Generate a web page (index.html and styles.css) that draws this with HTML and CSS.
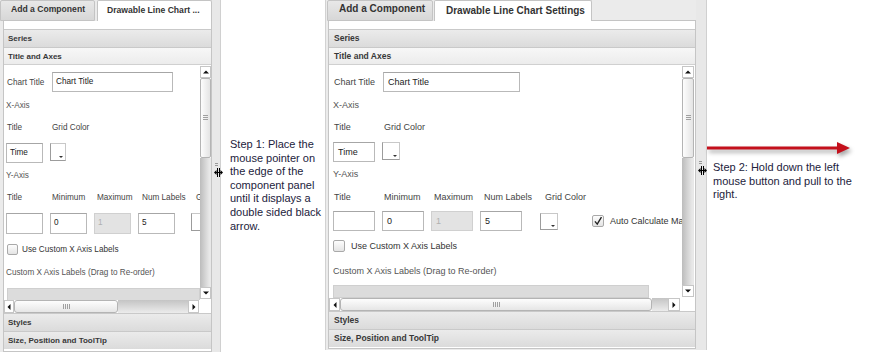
FILE: index.html
```html
<!doctype html>
<html lang="en">
  <head>
    <meta charset="UTF-8" />
    <title>Resize the component panel</title>
    <link rel="stylesheet" href="styles.css">
  </head>
  <body>
    <div class="page">

      <!-- before: narrow panel -->
      <div class="panel panel-narrow">
        <div class="pane">
          <div class="tabs">
            <div class="tab">Add a Component</div>
            <div class="tab tab-active">Drawable Line Chart ...</div>
          </div>
          <div class="box">
            <div class="acc-head">Series</div>
            <div class="acc-head acc-open">Title and Axes</div>
            <div class="acc-body">
              <div class="view">
                <div class="form">
                  <div class="row-chart">
                    <span class="lbl">Chart Title</span>
                    <div class="input input-wide">Chart Title</div>
                  </div>
                  <div class="sec sec-x">X-Axis</div>
                  <div class="labels labels-x">
                    <span>Title</span><span>Grid Color</span>
                  </div>
                  <div class="fields fields-x">
                    <div class="cell"><div class="input">Time</div></div>
                    <div class="cell"><div class="color"></div></div>
                  </div>
                  <div class="sec sec-y">Y-Axis</div>
                  <div class="labels labels-y">
                    <span>Title</span><span>Minimum</span><span>Maximum</span><span>Num Labels</span><span>Grid Color</span>
                  </div>
                  <div class="fields fields-y">
                    <div class="cell"><div class="input"></div></div>
                    <div class="cell"><div class="input">0</div></div>
                    <div class="cell"><div class="input input-off">1</div></div>
                    <div class="cell"><div class="input">5</div></div>
                    <div class="cell"><div class="color"></div></div>
                  </div>
                  <div class="check-row">
                    <span class="check"></span>
                    <span>Use Custom X Axis Labels</span>
                  </div>
                  <div class="sec sec-custom">Custom X Axis Labels (Drag to Re-order)</div>
                  <div class="list"></div>
                </div>
                <div class="vscroll">
                  <div class="sbtn sbtn-up"></div>
                  <div class="thumb"><span class="grip"></span></div>
                  <div class="track"></div>
                  <div class="sbtn sbtn-down"></div>
                </div>
              </div>
              <div class="hscroll">
                <div class="sbtn sbtn-left"></div>
                <div class="hthumb"><span class="hgrip"></span></div>
                <div class="htrack"></div>
                <div class="sbtn sbtn-right"></div>
                <div class="corner"></div>
              </div>
            </div>
            <div class="acc-head">Styles</div>
            <div class="acc-head">Size, Position and ToolTip</div>
          </div>
        </div>
        <div class="splitter">
          <span class="dots"></span>
          <svg class="cursor" width="9" height="9" viewBox="0 0 9 9">
            <path d="M3.5 0v9M5.5 0v9M1 4.5h7" stroke="#000" stroke-width="1" fill="none"/>
            <polygon points="0,4.5 2.5,2 2.5,7" fill="#000"/>
            <polygon points="9,4.5 6.5,2 6.5,7" fill="#000"/>
          </svg>
        </div>
      </div>

      <div class="step step-one">
        Step 1: Place the<br>mouse pointer on<br>the edge of the<br>component panel<br>until it displays a<br>double sided black<br>arrow.
      </div>

      <!-- after: wide panel -->
      <div class="panel panel-wide">
        <div class="pane">
          <div class="tabs">
            <div class="tab">Add a Component</div>
            <div class="tab tab-active">Drawable Line Chart Settings</div>
            <div class="tab-fill"></div>
          </div>
          <div class="box">
            <div class="acc-head">Series</div>
            <div class="acc-head acc-open">Title and Axes</div>
            <div class="acc-body">
              <div class="view">
                <div class="form">
                  <div class="row-chart">
                    <span class="lbl">Chart Title</span>
                    <div class="input input-wide">Chart Title</div>
                  </div>
                  <div class="sec sec-x">X-Axis</div>
                  <div class="labels labels-x">
                    <span>Title</span><span>Grid Color</span>
                  </div>
                  <div class="fields fields-x">
                    <div class="cell"><div class="input">Time</div></div>
                    <div class="cell"><div class="color"></div></div>
                  </div>
                  <div class="sec sec-y">Y-Axis</div>
                  <div class="labels labels-y">
                    <span>Title</span><span>Minimum</span><span>Maximum</span><span>Num Labels</span><span>Grid Color</span>
                  </div>
                  <div class="fields fields-y">
                    <div class="cell"><div class="input"></div></div>
                    <div class="cell"><div class="input">0</div></div>
                    <div class="cell"><div class="input input-off">1</div></div>
                    <div class="cell"><div class="input">5</div></div>
                    <div class="cell"><div class="color"></div></div>
                    <div class="cell cell-auto">
                      <span class="check check-on">
                        <svg width="13" height="12" viewBox="0 0 13 12"><path d="M2.5 6.5l3 3.5 5.5-9" stroke="#222" stroke-width="1.8" fill="none"/></svg>
                      </span>
                      <span class="auto-text">Auto Calculate Max/Min</span>
                    </div>
                  </div>
                  <div class="check-row">
                    <span class="check"></span>
                    <span>Use Custom X Axis Labels</span>
                  </div>
                  <div class="sec sec-custom">Custom X Axis Labels (Drag to Re-order)</div>
                  <div class="list"></div>
                </div>
                <div class="vscroll">
                  <div class="sbtn sbtn-up"></div>
                  <div class="thumb"><span class="grip"></span></div>
                  <div class="track"></div>
                  <div class="sbtn sbtn-down"></div>
                </div>
              </div>
              <div class="hscroll">
                <div class="sbtn sbtn-left"></div>
                <div class="hthumb"><span class="hgrip"></span></div>
                <div class="htrack"></div>
                <div class="sbtn sbtn-right"></div>
                <div class="corner"></div>
              </div>
            </div>
            <div class="acc-head">Styles</div>
            <div class="acc-head">Size, Position and ToolTip</div>
          </div>
        </div>
        <div class="splitter">
          <span class="dots"></span>
          <svg class="cursor" width="9" height="9" viewBox="0 0 9 9">
            <path d="M3.5 0v9M5.5 0v9M1 4.5h7" stroke="#000" stroke-width="1" fill="none"/>
            <polygon points="0,4.5 2.5,2 2.5,7" fill="#000"/>
            <polygon points="9,4.5 6.5,2 6.5,7" fill="#000"/>
          </svg>
        </div>
      </div>

      <div class="step step-two">
        <svg class="arrow" width="146" height="16" viewBox="0 0 146 16">
          <rect x="0" y="5.5" width="132" height="3" fill="#c4101c"/>
          <polygon points="130,1 143,7 130,13" fill="#c4101c"/>
        </svg>
        <p>Step 2: Hold down the left<br>mouse button and pull to the<br>right.</p>
      </div>

    </div>
  </body>
</html>
```

FILE: styles.css
```css
body {
  margin: 0;
  font-family: "Liberation Sans", Arial, sans-serif;
  background-color: #fff;
}
.page {
  display: flex;
  width: 883px;
  height: 352px;
  overflow: hidden;
}

/* panel frame */
.panel {
  display: flex;
  flex: none;
  background-color: #ebebeb;
}
.panel-narrow {
  width: 221px;
  height: 352px;
}
.panel-wide {
  width: 382px;
  height: 350px;
}
.pane {
  display: flex;
  flex-direction: column;
  flex: none;
}
.panel-narrow .pane {
  width: 212px;
}
.panel-wide .pane {
  width: 369px;
  border-left: 1px solid #d2d2d2;
  padding-left: 1px;
}
.splitter {
  display: flex;
  flex-direction: column;
  box-sizing: border-box;
  border-right: 1px solid #d0d0d0;
  background-color: #e8e8e8;
}
.panel-narrow .splitter {
  width: 9px;
  padding: 163px 0 0 2px;
}
.panel-wide .splitter {
  width: 11px;
  padding: 161px 0 0 2px;
}
.dots {
  width: 3px;
  height: 4px;
  margin-left: 1px;
  background: repeating-linear-gradient(#9a9a9a 0 1px, transparent 1px 2px);
}
.cursor {
  display: block;
  margin-top: 1px;
}

/* tabs */
.tabs {
  display: flex;
  flex: none;
  height: 21px;
}
.tab {
  box-sizing: border-box;
  height: 21px;
  border: 1px solid #c4c4c4;
  border-radius: 2px 2px 0 0;
  background: linear-gradient(#e8e8e8, #d7d7d7);
  color: #333;
  font-weight: bold;
  line-height: 16px;
  white-space: nowrap;
}
.tab-active {
  border-bottom: none;
  background: #fff;
  line-height: 19px;
}
.tab-fill {
  flex: 1;
  border-bottom: 1px solid #c4c4c4;
}
.panel-narrow .tab {
  width: 95px;
  padding-left: 10px;
  font-size: 8.6px;
}
.panel-narrow .tab-active {
  flex: 1;
  margin-left: 2px;
  padding-left: 9px;
}
.panel-wide .tab {
  width: 106px;
  padding-left: 11px;
  font-size: 10px;
}
.panel-wide .tab-active {
  width: 158px;
  margin-left: 1px;
  padding-left: 11px;
}

/* accordion box */
.box {
  display: flex;
  flex-direction: column;
  flex: 1;
  min-height: 0;
  background-color: #fff;
  border: 1px solid #c5c5c5;
  border-top: none;
  padding-top: 8px;
}
.panel-narrow .box {
  margin-left: 3px;
  padding-bottom: 2px;
}
.panel-wide .box {
  margin: 0 0 1px 1px;
  padding-bottom: 1px;
}
.acc-head {
  flex: none;
  box-sizing: border-box;
  height: 18px;
  border-top: 1px solid #c9c9c9;
  background: linear-gradient(#ebebeb, #dbdbdb);
  color: #383838;
  font-weight: bold;
  line-height: 17px;
}
.acc-open {
  background: linear-gradient(#f7f7f7, #ececec);
  border-bottom: 1px solid #d0d0d0;
}
.panel-narrow .acc-head {
  padding-left: 4px;
  font-size: 8px;
}
.panel-wide .acc-head {
  padding-left: 5px;
  font-size: 8.5px;
}
.acc-body {
  display: flex;
  flex-direction: column;
  flex: 1;
  min-height: 0;
}
.view {
  display: flex;
  flex: 1;
  min-height: 0;
}

/* form */
.form {
  flex: 1;
  min-width: 0;
  overflow: hidden;
  color: #444;
  white-space: nowrap;
}
.panel-narrow .form {
  padding: 7px 0 0 2px;
  font-size: 8.2px;
}
.panel-wide .form {
  padding: 7px 0 0 4px;
  font-size: 9px;
}
.row-chart {
  display: flex;
  align-items: center;
  height: 20px;
}
.lbl {
  padding-left: 1px;
}
.panel-narrow .lbl {
  width: 45px;
}
.panel-wide .lbl {
  width: 49px;
}
.input {
  box-sizing: border-box;
  height: 20px;
  border: 1px solid #b9b9b9;
  border-top-color: #a6a6a6;
  background-color: #fff;
  color: #222;
  line-height: 18px;
}
.panel-narrow .input {
  width: 37px;
  padding-left: 3px;
}
.panel-wide .input {
  width: 42px;
  padding-left: 4px;
}
.panel-narrow .input-wide {
  width: 121px;
}
.panel-wide .input-wide {
  width: 137px;
}
.input-off {
  background-color: #e3e3e3;
  border-color: #d0d0d0;
  color: #b0b0b0;
}
.color {
  position: relative;
  box-sizing: border-box;
  border: 1px solid #9c9c9c;
  border-top-color: #c8c8c8;
  border-right-color: #c8c8c8;
  background-color: #fff;
}
.color::after {
  content: "";
  position: absolute;
  right: 2px;
  bottom: 2px;
  border-left: 2px solid transparent;
  border-right: 2px solid transparent;
  border-top: 2px solid #333;
}
.panel-narrow .color {
  width: 16px;
  height: 18px;
}
.panel-wide .color {
  width: 18px;
  height: 18px;
}
.sec {
  color: #555;
}
.labels,
.fields {
  display: flex;
}
.labels span,
.cell {
  flex: none;
}
.labels span {
  padding-left: 1px;
}
.panel-narrow .labels span,
.panel-narrow .cell {
  width: 44px;
}
.panel-narrow .labels span:nth-child(4),
.panel-narrow .cell:nth-child(4) {
  width: 53px;
}
.panel-wide .labels span,
.panel-wide .cell {
  width: 49px;
}
.panel-wide .labels span:nth-child(4),
.panel-wide .cell:nth-child(4) {
  width: 60px;
}
.panel-wide .cell:nth-child(5) {
  width: 52px;
}
.panel-wide .fields-y .color {
  height: 17px;
  margin-top: 2px;
}
.cell-auto {
  display: flex;
  align-items: center;
  color: #333;
}
.panel-wide .cell-auto {
  width: auto;
}
.panel-wide .check-on {
  margin-right: 6px;
}
.check {
  display: flex;
  align-items: center;
  justify-content: center;
  box-sizing: border-box;
  border: 1px solid #a9a9a9;
  border-radius: 2px;
  background: linear-gradient(#fdfdfd, #e4e4e4);
}
.panel-narrow .check {
  width: 11px;
  height: 11px;
  margin: 0 4px 0 1px;
}
.panel-wide .check {
  width: 12px;
  height: 12px;
  margin-right: 6px;
}
.check-row {
  display: flex;
  align-items: center;
  color: #333;
}
.list {
  box-sizing: border-box;
  border: 1px solid #cfcfcf;
  background-color: #dcdcdc;
}

/* vertical rhythm, narrow */
.panel-narrow .sec-x { height: 28px; line-height: 28px; }
.panel-narrow .labels-x { height: 16px; line-height: 16px; }
.panel-narrow .fields-x { margin-top: 7px; }
.panel-narrow .sec-y { height: 26px; line-height: 26px; }
.panel-narrow .labels-y { height: 18px; line-height: 18px; }
.panel-narrow .fields-y { margin-top: 6px; }
.panel-narrow .fields-y .input { height: 21px; }
.panel-narrow .check-row { height: 30px; }
.panel-narrow .sec-custom { height: 18px; line-height: 18px; }
.panel-narrow .list { height: 14px; margin: 6px 0 0 1px; }

/* vertical rhythm, wide */
.panel-wide .sec-x { height: 26px; line-height: 26px; }
.panel-wide .labels-x { height: 18px; line-height: 18px; }
.panel-wide .fields-x { margin-top: 6px; }
.panel-wide .sec-y { height: 24px; line-height: 24px; }
.panel-wide .labels-y { height: 22px; line-height: 22px; }
.panel-wide .fields-y { margin-top: 3px; height: 20px; }
.panel-wide .check-row { height: 30px; }
.panel-wide .sec-custom { height: 20px; line-height: 20px; }
.panel-wide .list { width: 316px; height: 13px; margin-top: 4px; }

/* scrollbars */
.vscroll {
  display: flex;
  flex-direction: column;
  flex: none;
  padding: 1px 0;
}
.panel-narrow .vscroll {
  width: 11px;
}
.panel-wide .vscroll {
  width: 12px;
  margin-right: 1px;
}
.sbtn {
  position: relative;
  flex: none;
  box-sizing: border-box;
  border: 1px solid #c6c6c6;
  background-color: #fff;
}
.sbtn::before {
  content: "";
  position: absolute;
  left: 50%;
  top: 50%;
  transform: translate(-50%, -50%);
}
.sbtn-up,
.sbtn-down {
  height: 12px;
}
.sbtn-up::before {
  border-left: 3px solid transparent;
  border-right: 3px solid transparent;
  border-bottom: 3px solid #111;
}
.sbtn-down::before {
  border-left: 3px solid transparent;
  border-right: 3px solid transparent;
  border-top: 3px solid #111;
}
.sbtn-left::before {
  border-top: 3px solid transparent;
  border-bottom: 3px solid transparent;
  border-right: 3px solid #111;
}
.sbtn-right::before {
  border-top: 3px solid transparent;
  border-bottom: 3px solid transparent;
  border-left: 3px solid #111;
}
.thumb {
  display: flex;
  align-items: center;
  justify-content: center;
  flex: none;
  box-sizing: border-box;
  height: 80px;
  border: 1px solid #b4b4b4;
  border-radius: 2px;
  background: linear-gradient(to right, #fdfdfd, #e4e4e4);
}
.grip {
  width: 5px;
  height: 6px;
  background: repeating-linear-gradient(#a0a0a0 0 1px, transparent 1px 2px);
}
.track {
  flex: 1;
  background: linear-gradient(to right, #bcbcbc, #e8e8e8 85%);
}
.hscroll {
  display: flex;
  flex: none;
  height: 13px;
}
.sbtn-left,
.sbtn-right {
  height: 13px;
}
.hthumb {
  display: flex;
  align-items: center;
  justify-content: center;
  flex: none;
  box-sizing: border-box;
  border: 1px solid #b4b4b4;
  border-radius: 3px;
  background: linear-gradient(#fdfdfd, #e6e6e6);
}
.hgrip {
  width: 7px;
  height: 5px;
  background: repeating-linear-gradient(to right, #a0a0a0 0 1px, transparent 1px 2px);
}
.htrack {
  flex: 1;
  background: linear-gradient(#c4c4c4, #ececec);
}
.corner {
  flex: none;
  background-color: #fff;
}
.panel-narrow .sbtn-left { width: 10px; }
.panel-narrow .hthumb { width: 104px; }
.panel-narrow .sbtn-right { width: 11px; }
.panel-narrow .corner { width: 12px; }
.panel-wide .sbtn-left { width: 11px; }
.panel-wide .hthumb { width: 312px; }
.panel-wide .sbtn-right { width: 12px; }
.panel-wide .corner { width: 15px; }

/* instructions */
.step {
  flex: none;
  color: #22223c;
  font-size: 11px;
  line-height: 13.6px;
}
.step-one {
  width: 95px;
  padding: 138px 0 0 9px;
}
.step-two {
  width: 176px;
  padding-top: 141px;
}
.arrow {
  display: block;
  filter: drop-shadow(2px 3px 2px rgba(0, 0, 0, 0.35));
}
.step-two p {
  margin: 4px 0 0 6px;
}
```
